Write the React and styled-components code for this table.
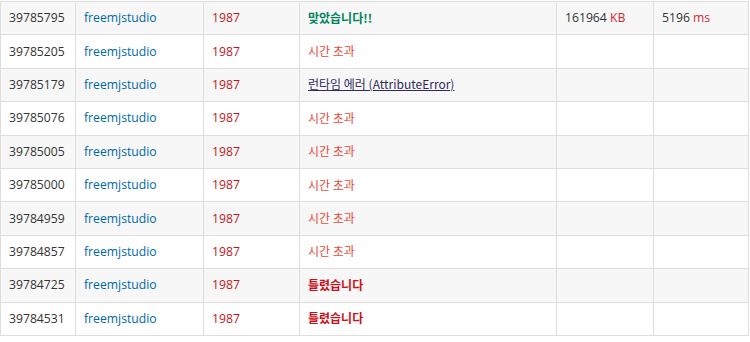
import React from "react";
import styled, { createGlobalStyle } from "styled-components";

const Global = createGlobalStyle`
  html, body { margin: 0; padding: 0; background: #fff; }
  body { font-family: "Open Sans", "Noto Sans CJK KR", sans-serif; }
`;

const Table = styled.table`
  margin-top: 1px;
  width: 749px;
  table-layout: fixed;
  border-collapse: collapse;
  font-size: 12.2px;
  color: #333;
`;

const Row = styled.tr`
  height: 33.4px;
  background: ${(p) => (p.$striped ? "#f7f7f7" : "#fff")};
`;

const Cell = styled.td`
  border: 1px solid #ddd;
  padding: 0 8px;
  vertical-align: middle;
  white-space: nowrap;
  line-height: 18px;
`;

const UserLink = styled.a`
  color: #0067a8;
  text-decoration: none;
`;

const ProblemLink = styled.a`
  color: #c0161b;
  text-decoration: none;
`;

const Result = styled.span`
  font-family: "Noto Sans CJK KR", "Open Sans", sans-serif;
  font-size: 12px;
  color: ${(p) => p.$color};
  font-weight: ${(p) => (p.$bold ? 600 : 400)};
  text-decoration: ${(p) => (p.$underline ? "underline" : "none")};
`;

const Unit = styled.span`
  color: #d0272d;
`;

const RESULTS = {
  ac: { text: "맞았습니다!!", color: "#00825a", bold: true },
  tle: { text: "시간 초과", color: "#e74c3c" },
  rte: { text: "런타임 에러 (AttributeError)", color: "#2e2a5e", underline: true },
  wa: { text: "틀렸습니다", color: "#c8101b", bold: true },
};

const rows = [
  { id: "39785795", r: "ac", mem: "161964", time: "5196" },
  { id: "39785205", r: "tle" },
  { id: "39785179", r: "rte" },
  { id: "39785076", r: "tle" },
  { id: "39785005", r: "tle" },
  { id: "39785000", r: "tle" },
  { id: "39784959", r: "tle" },
  { id: "39784857", r: "tle" },
  { id: "39784725", r: "wa" },
  { id: "39784531", r: "wa" },
];

export default function App() {
  return (
    <>
      <Global />
      <Table>
        <colgroup>
          <col style={{ width: 75 }} />
          <col style={{ width: 128 }} />
          <col style={{ width: 96 }} />
          <col style={{ width: 257 }} />
          <col style={{ width: 97 }} />
          <col style={{ width: 95 }} />
        </colgroup>
        <tbody>
          {rows.map((row, i) => {
            const res = RESULTS[row.r];
            return (
              <Row key={row.id} $striped={i % 2 === 0}>
                <Cell>{row.id}</Cell>
                <Cell>
                  <UserLink href="#">freemjstudio</UserLink>
                </Cell>
                <Cell>
                  <ProblemLink href="#">1987</ProblemLink>
                </Cell>
                <Cell>
                  <Result $color={res.color} $bold={res.bold} $underline={res.underline}>
                    {res.text}
                  </Result>
                </Cell>
                <Cell>
                  {row.mem && (
                    <>
                      {row.mem} <Unit>KB</Unit>
                    </>
                  )}
                </Cell>
                <Cell>
                  {row.time && (
                    <>
                      {row.time} <Unit>ms</Unit>
                    </>
                  )}
                </Cell>
              </Row>
            );
          })}
        </tbody>
      </Table>
    </>
  );
}
